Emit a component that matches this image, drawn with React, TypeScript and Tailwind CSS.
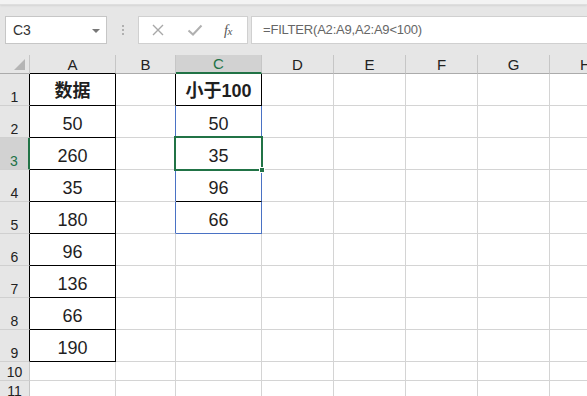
import React from "react";

const GRID = "border-[#d4d4d4]";

const colA = ["数据", "50", "260", "35", "180", "96", "136", "66", "190"];
const colC = ["小于100", "50", "35", "96", "66"];

const letters = ["A", "B", "C", "D", "E", "F", "G", "H"];
const widths = ["w-[86px]", "w-[60px]", "w-[86px]", "w-[72px]", "w-[72px]", "w-[72px]", "w-[72px]", "w-[72px]"];
const heights = ["h-[32px]", "h-[32px]", "h-[32px]", "h-[32px]", "h-[32px]", "h-[32px]", "h-[32px]", "h-[32px]", "h-[32px]", "h-[19px]", "h-[19px]"];

// right border colour of a cell
function rightOf(col: number, row: number) {
  if (col === 0 && row <= 9) return "border-r-black";
  if ((col === 1 || col === 2) && row === 1) return "border-r-black";
  if ((col === 1 || col === 2) && row >= 2 && row <= 5) return "border-r-[#4a72c4]";
  return "border-r-[#d4d4d4]";
}

function bottomOf(col: number, row: number) {
  if (col === 0 && row <= 9) return "border-b-black";
  if (col === 2 && row <= 4) return "border-b-black";
  if (col === 2 && row === 5) return "border-b-[#4a72c4]";
  return "border-b-[#d4d4d4]";
}

function FormulaBar() {
  return (
    <div className="h-[55px] bg-[#e6e6e6]">
      <div className="h-[5px] bg-[#f3f3f3] border-b border-[#dedede] shadow-[0_1px_2px_rgba(0,0,0,0.08)]" />
      <div className="flex items-start pt-[11px] pl-[5px]">
        <div className="flex items-center justify-between w-[102px] h-[28px] bg-white border border-[#c6c6c6] pl-[7px] pr-[6px]">
          <span className="text-[14px] text-[#333]">C3</span>
          <span className="w-0 h-0 border-l-[4px] border-r-[4px] border-t-[4px] border-l-transparent border-r-transparent border-t-[#777] mt-[1px]" />
        </div>
        <div className="w-[31px] h-[28px] flex flex-col items-center justify-center gap-[2px]">
          <span className="w-[2px] h-[2px] bg-[#b0b0b0]" />
          <span className="w-[2px] h-[2px] bg-[#b0b0b0]" />
          <span className="w-[2px] h-[2px] bg-[#b0b0b0]" />
        </div>
        <div className="flex items-center w-[110px] h-[28px] bg-white border border-[#d0d0d0]">
          <svg width="14" height="14" viewBox="0 0 14 14" className="ml-[12px]">
            <path d="M2 2 L12 12 M12 2 L2 12" stroke="#a8a8a8" strokeWidth="1.4" />
          </svg>
          <svg width="16" height="14" viewBox="0 0 16 14" className="ml-[22px]">
            <path d="M1.5 7.5 L6 11.5 L14.5 2.5" stroke="#b0b0b0" strokeWidth="2" fill="none" />
          </svg>
          <span className="ml-[21px] text-[14px] italic font-['Liberation_Serif',serif] text-[#555] tracking-[-0.5px]">
            f<span className="text-[11px]">x</span>
          </span>
        </div>
        <div className="ml-[3px] flex-1 h-[28px] bg-white border border-[#d0d0d0] border-r-0 flex items-center pl-[11px]">
          <span className="text-[13px] text-[#666] tracking-[-0.2px]">=FILTER(A2:A9,A2:A9&lt;100)</span>
        </div>
      </div>
    </div>
  );
}

function HeaderRow() {
  return (
    <div className="flex h-[19px] bg-[#e6e6e6]">
      <div className="w-[30px] h-full shrink-0 flex items-end justify-end pr-[4px] pb-[3px] border-r border-b border-r-[#c6c6c6] border-b-[#ababab]">
        <svg width="11" height="11" viewBox="0 0 11 11">
          <polygon points="11,0 11,11 0,11" fill="#b5b5b5" />
        </svg>
      </div>
      {letters.map((l, i) => {
        const sel = i === 2;
        const bottom = i === 0 ? "border-b-black" : sel ? "border-b-2 border-b-[#217346]" : "border-b-[#ababab]";
        return (
          <div
            key={l}
            className={`${widths[i]} h-full shrink-0 flex items-end justify-center border-r border-b border-r-[#c6c6c6] ${bottom} ${
              sel ? "bg-[#d2d2d2] text-[#217346]" : "text-[#222]"
            } text-[15px] leading-none pb-[1px]`}
          >
            {l}
          </div>
        );
      })}
    </div>
  );
}

function Row({ r }: { r: number }) {
  const sel = r === 3;
  const hdrRight = sel
    ? "border-r-2 border-r-[#217346]"
    : r <= 9
    ? "border-r-black"
    : "border-r-[#c6c6c6]";
  return (
    <div className={`flex ${heights[r - 1]}`}>
      <div
        className={`w-[30px] h-full shrink-0 flex items-end justify-center border-r border-b border-b-[#d0d0d0] ${hdrRight} ${
          sel ? "bg-[#d2d2d2] text-[#217346]" : "bg-[#e6e6e6] text-[#222]"
        } text-[14px] leading-none pb-[1px]`}
      >
        {r}
      </div>
      {letters.map((l, i) => {
        let text = "";
        let bold = false;
        if (i === 0 && r <= 9) {
          text = colA[r - 1];
          bold = r === 1;
        }
        if (i === 2 && r <= 5) {
          text = colC[r - 1];
          bold = r === 1;
        }
        return (
          <div
            key={l}
            className={`${widths[i]} h-full shrink-0 relative flex items-end justify-center border-r border-b ${GRID} ${rightOf(i, r)} ${bottomOf(i, r)} bg-white ${
              bold ? "font-bold text-[18px] pb-[5px]" : "text-[18px] pb-[4px]"
            } leading-none text-[#1f1f1f]`}
          >
            {text}
            {i === 2 && sel && (
              <>
                <span className="absolute z-10 -left-[2px] -top-[2px] -right-[2px] -bottom-[2px] border-2 border-[#217346]" />
                <span className="absolute z-20 -right-[4px] -bottom-[4px] w-[6px] h-[6px] bg-[#217346] border border-white" />
              </>
            )}
          </div>
        );
      })}
    </div>
  );
}

export default function App() {
  return (
    <div className="w-[587px] h-[396px] overflow-hidden bg-white font-['Liberation_Sans','Noto_Sans_CJK_SC',sans-serif]">
      <FormulaBar />
      <HeaderRow />
      {Array.from({ length: 11 }, (_, k) => (
        <Row key={k} r={k + 1} />
      ))}
    </div>
  );
}
